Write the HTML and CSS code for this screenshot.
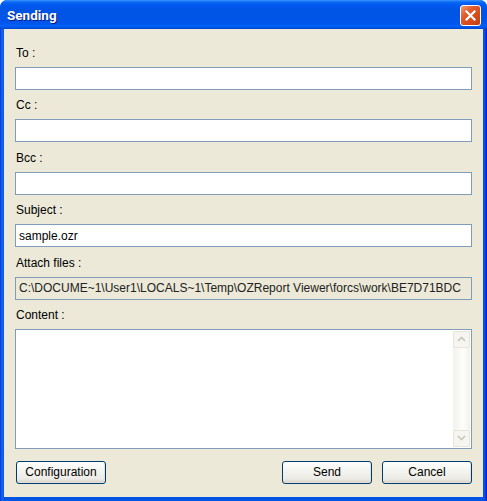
FILE: index.html
```html
<!DOCTYPE html>
<html lang="en">
<head>
  <meta charset="UTF-8">
  <meta name="viewport" content="width=device-width, initial-scale=1.0">
  <link rel="stylesheet" href="styles.css">
  <title>Sending</title>
</head>
<body>
  <div class="window">
    <div class="titlebar">
      <span class="title">Sending</span>
      <button class="close" aria-label="Close">
        <svg width="11" height="11" viewBox="0 0 11 11">
          <path d="M1.5 1.5 L9.5 9.5 M9.5 1.5 L1.5 9.5" stroke="#fff" stroke-width="2.2" stroke-linecap="square"/>
        </svg>
      </button>
    </div>

    <div class="client">
      <div class="field">
        <label>To :</label>
        <input type="text" class="text-input">
      </div>
      <div class="field">
        <label>Cc :</label>
        <input type="text" class="text-input">
      </div>
      <div class="field">
        <label>Bcc :</label>
        <input type="text" class="text-input">
      </div>
      <div class="field">
        <label>Subject :</label>
        <input type="text" class="text-input" value="sample.ozr">
      </div>
      <div class="field">
        <label>Attach files :</label>
        <input type="text" class="text-input readonly" readonly value="C:\DOCUME~1\User1\LOCALS~1\Temp\OZReport Viewer\forcs\work\BE7D71BDC">
      </div>
      <div class="field">
        <label>Content :</label>
        <div class="content-box">
          <textarea class="content-text"></textarea>
          <div class="scrollbar">
            <div class="scroll-btn">
              <svg width="9" height="6" viewBox="0 0 9 6"><path d="M1 5 L4.5 1.5 L8 5" fill="none" stroke="#c9c7ba" stroke-width="1.6"/></svg>
            </div>
            <div class="scroll-track"></div>
            <div class="scroll-btn">
              <svg width="9" height="6" viewBox="0 0 9 6"><path d="M1 1 L4.5 4.5 L8 1" fill="none" stroke="#c9c7ba" stroke-width="1.6"/></svg>
            </div>
          </div>
        </div>
      </div>

      <div class="actions">
        <button class="xp-btn">Configuration</button>
        <div class="actions-right">
          <button class="xp-btn">Send</button>
          <button class="xp-btn">Cancel</button>
        </div>
      </div>
    </div>
  </div>
</body>
</html>
```

FILE: styles.css
```css
body {
  margin: 0;
  background-color: #fff;
  font-family: 'Liberation Sans', Arial, sans-serif;
  font-size: 12px;
}

.window {
  width: 487px;
  height: 501px;
  display: flex;
  flex-direction: column;
  border-radius: 7px 7px 0 0;
  background: linear-gradient(to right, #0831d9 0, #166aee 2px, #0055e5 4px, #0055e5 483px, #0a4ce0 485px, #0019cf 487px);
  overflow: hidden;
}

.titlebar {
  height: 29px;
  flex: none;
  display: flex;
  align-items: center;
  justify-content: space-between;
  padding: 0 6px 0 7px;
  background: linear-gradient(to bottom, #3d95ff 0, #0a6af6 2px, #0058ee 5px, #0054e3 40%, #0055eb 80%, #0062f7 90%, #0043cf 100%);
  border-radius: 7px 7px 0 0;
}

.title {
  color: #fff;
  font-family: Roboto, 'Liberation Sans', sans-serif;
  font-weight: bold;
  font-size: 13.5px;
  text-shadow: 1px 1px 0 #0a1883;
  margin-top: 1px;
}

.close {
  width: 21px;
  height: 21px;
  padding: 0;
  border: 1px solid #fff;
  border-radius: 3px;
  background: linear-gradient(135deg, #f09a7a 0, #e35a2a 35%, #d34a1a 70%, #c33a12 100%);
  display: flex;
  align-items: center;
  justify-content: center;
  margin-top: 1px;
}

.client {
  flex: 1;
  margin: 0 4px 4px;
  background-color: #ece9d8;
  padding: 17px 11px 0;
  display: flex;
  flex-direction: column;
}

.field {
  display: flex;
  flex-direction: column;
  margin-bottom: 8.4px;
}

.field label {
  height: 14px;
  line-height: 14px;
  margin-bottom: 7px;
  padding-left: 1px;
  color: #000;
}

.text-input {
  height: 23px;
  box-sizing: border-box;
  border: 1px solid #7f9db9;
  padding: 0 3px;
  font-family: 'Liberation Sans', Arial, sans-serif;
  font-size: 12px;
  background-color: #fff;
  outline: none;
}

.text-input.readonly {
  background-color: #ece9d8;
  color: #222;
}

.content-box {
  height: 120px;
  box-sizing: border-box;
  border: 1px solid #7f9db9;
  background-color: #fff;
  display: flex;
}

.content-text {
  flex: 1;
  border: none;
  resize: none;
  outline: none;
  overflow: hidden;
}

.scrollbar {
  width: 17px;
  margin: 1px;
  display: flex;
  flex-direction: column;
  background: linear-gradient(to right, #f3f1ec, #fefefb 60%, #f3f1ec);
}

.scroll-btn {
  height: 17px;
  box-sizing: border-box;
  border: 1px solid #e8e6dc;
  border-radius: 2px;
  background: #f6f5ef;
  display: flex;
  align-items: center;
  justify-content: center;
}

.scroll-track {
  flex: 1;
}

.actions {
  display: flex;
  justify-content: space-between;
  padding: 3.6px 0 0 1px;
}

.actions-right {
  display: flex;
  gap: 10px;
}

.xp-btn {
  width: 90px;
  height: 23px;
  padding: 0;
  border: 1px solid #003c74;
  border-radius: 3px;
  background: linear-gradient(to bottom, #ffffff 0, #f4f4f0 40%, #ecebe6 80%, #d6d0c5 100%);
  box-shadow: inset -1px -1px 0 #e3e0d5;
  font-family: 'Liberation Sans', Arial, sans-serif;
  font-size: 12px;
  color: #000;
}
```
